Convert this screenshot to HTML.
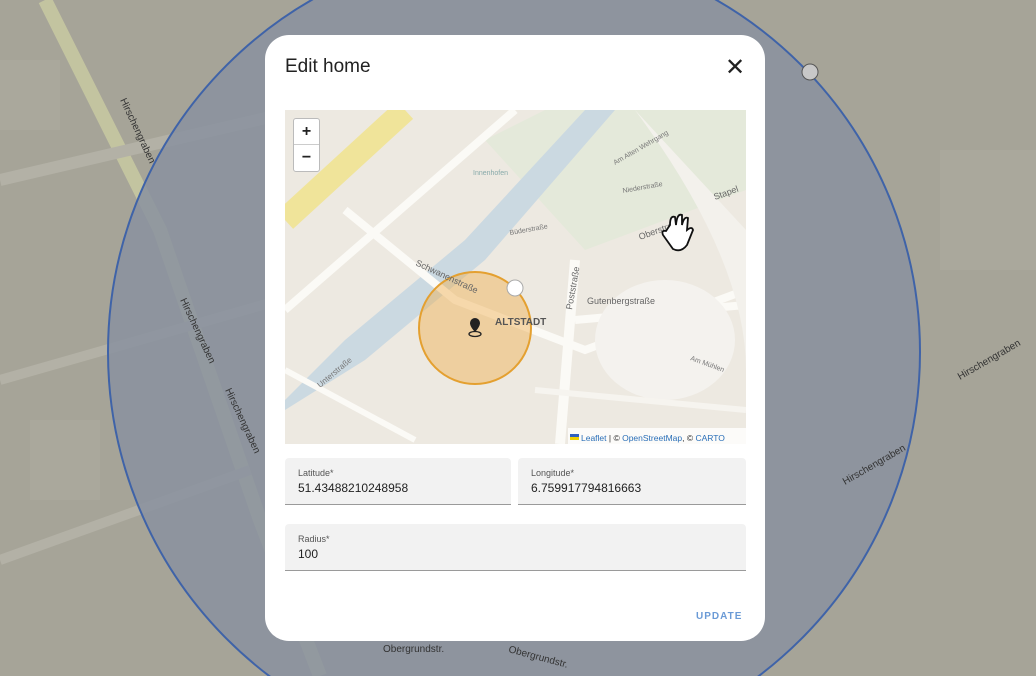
<!DOCTYPE html>
<html style="overflow:hidden;width:1036px;height:676px"><head><meta charset="utf-8"><style>
*{margin:0;padding:0;box-sizing:border-box}
body{width:1036px;height:676px;overflow:hidden;position:relative;background:#a6a498;font-family:"Liberation Sans",Arial,sans-serif}
.abs{position:absolute}
.dlg{left:265px;top:35px;width:500px;height:606px;background:#fff;border-radius:24px;overflow:hidden}
.title{left:20px;top:21px;font-size:19px;color:#222}
.close{left:460px;top:18px;font-size:24px;color:#222}
.map{left:20px;top:75px;width:461px;height:334px;background:#ece8df;overflow:hidden}
.field{background:#f2f2f2;border-bottom:1px solid #9a9a9a;border-radius:4px 4px 0 0}
.lbl{position:absolute;left:13px;top:10px;font-size:9px;color:#555}
.val{position:absolute;left:13px;top:23px;font-size:12px;color:#222}
.zoom{left:8px;top:8px;width:27px;height:54px;background:#fff;border:1px solid #bbb;border-radius:3px;font-size:16px;text-align:center;line-height:25px;color:#222;font-weight:bold}
</style></head><body>
<svg class="abs" style="left:0;top:0;display:block" width="1036" height="676" viewBox="0 0 1036 676">
<g fill="#aaa89c">
<rect x="0" y="60" width="60" height="70"/>
<rect x="30" y="420" width="70" height="80"/><rect x="940" y="150" width="96" height="120"/>
</g>
<path d="M45 0 L160 230 L260 520 L320 676" stroke="#c3c4a0" stroke-width="14" fill="none"/>
<path d="M0 180 L300 110" stroke="#b3b1a6" stroke-width="12" fill="none"/>
<path d="M0 380 L280 300" stroke="#b3b1a6" stroke-width="10" fill="none"/>
<path d="M0 560 L250 470" stroke="#b3b1a6" stroke-width="10" fill="none"/>
<circle cx="514" cy="352" r="406" fill="#8a929f" fill-opacity="0.85" stroke="#3f63a8" stroke-width="2"/>
<circle cx="810" cy="72" r="8" fill="#c8c8c8" stroke="#555"/>
<text x="120" y="100" font-size="10" fill="#333" transform="rotate(65 120 100)">Hirschengraben</text>
<text x="180" y="300" font-size="10" fill="#333" transform="rotate(65 180 300)">Hirschengraben</text>
<text x="225" y="390" font-size="10" fill="#333" transform="rotate(65 225 390)">Hirschengraben</text>
<text x="960" y="380" font-size="10" fill="#333" transform="rotate(-30 960 380)">Hirschengraben</text>
<text x="845" y="485" font-size="10" fill="#333" transform="rotate(-30 845 485)">Hirschengraben</text>
<text x="383" y="652" font-size="10" fill="#333">Obergrundstr.</text>
<text x="508" y="652" font-size="10" fill="#333" transform="rotate(15 508 652)">Obergrundstr.</text>
</svg>
<div class="abs dlg">
<div class="abs title">Edit home</div>
<div class="abs close">✕</div>
<div class="abs map">
<svg width="461" height="334" style="position:absolute;left:0;top:0;display:block">
<rect x="0" y="0" width="461" height="334" fill="#ede9e1"/>
<path d="M200 30 L260 0 L461 0 L461 80 L300 140 Z" fill="#e4e9da"/>
<path d="M0 110 L120 0" stroke="#f0e49a" stroke-width="24" fill="none"/>
<path d="M0 290 L60 230 L180 130 L300 0 L330 0 L200 150 L80 250 L0 300 Z" fill="#cbd9e1"/>
<path d="M0 200 L230 0" stroke="#fbfaf6" stroke-width="8" fill="none"/>
<path d="M60 100 L170 190 L300 240 L461 180" stroke="#fbfaf6" stroke-width="8" fill="none"/>
<path d="M290 150 L275 334" stroke="#fbfaf6" stroke-width="10" fill="none"/>
<path d="M290 210 L461 195" stroke="#fbfaf6" stroke-width="8" fill="none"/>
<path d="M350 0 Q461 150 461 260 L461 120 Z" fill="#f3f1ec"/>
<ellipse cx="380" cy="230" rx="70" ry="60" fill="#f4f2ee"/>
<path d="M0 260 L130 330" stroke="#fbfaf6" stroke-width="6" fill="none"/>
<path d="M250 280 L461 300" stroke="#f6f4ef" stroke-width="6" fill="none"/>
<circle cx="190" cy="218" r="56" fill="#f0b050" fill-opacity="0.45" stroke="#e4a030" stroke-width="2"/>
<circle cx="230" cy="178" r="8" fill="#fff" stroke="#aaa"/>
<path d="M190 208 a5 5 0 0 1 5 5 c0 4 -5 9 -5 9 c0 0 -5 -5 -5 -9 a5 5 0 0 1 5 -5z" fill="#222"/>
<ellipse cx="190" cy="224" rx="6" ry="2.5" fill="none" stroke="#222" stroke-width="1.3"/>
<text x="210" y="215" font-size="10" font-weight="bold" fill="#555">ALTSTADT</text>
<text x="130" y="155" font-size="9" fill="#666" transform="rotate(25 130 155)">Schwanenstraße</text>
<text x="302" y="194" font-size="9" fill="#666">Gutenbergstraße</text>
<text x="287" y="200" font-size="9" fill="#666" transform="rotate(-80 287 200)">Poststraße</text>
<text x="355" y="130" font-size="9" fill="#666" transform="rotate(-20 355 130)">Oberstraße</text>
<text x="430" y="90" font-size="9" fill="#666" transform="rotate(-20 430 90)">Stapel</text>
<text x="188" y="65" font-size="7" fill="#8aa">Innenhofen</text>
<text x="225" y="125" font-size="7" fill="#777" transform="rotate(-10 225 125)">Büderstraße</text>
<text x="338" y="83" font-size="7" fill="#777" transform="rotate(-10 338 83)">Niederstraße</text>
<text x="330" y="55" font-size="7" fill="#777" transform="rotate(-30 330 55)">Am Alten Wehrgang</text>
<text x="35" y="278" font-size="8" fill="#777" transform="rotate(-40 35 278)">Unterstraße</text>
<text x="405" y="250" font-size="7" fill="#777" transform="rotate(20 405 250)">Am Mühlen</text>
<path d="M385 115 q0-10 5-8 l1 8 q1-12 6-10 l0 10 q2-9 6-7 l-1 12 q5-4 6 0 l-6 15 q-6 8-14 4 l-10-14 q-2-5 3-4 z" fill="#fff" stroke="#111" stroke-width="1.8"/>
<rect x="283" y="318" width="178" height="16" fill="#fff" fill-opacity="0.8"/>
<rect x="285" y="324" width="9" height="3" fill="#3060c0"/><rect x="285" y="327" width="9" height="3" fill="#f0d000"/>
<text x="296" y="331" font-size="8.5" fill="#333"><tspan fill="#2a6fb8">Leaflet</tspan> | © <tspan fill="#2a6fb8">OpenStreetMap</tspan>, © <tspan fill="#2a6fb8">CARTO</tspan></text>
</svg>
<div class="abs zoom">+<div style="border-top:1px solid #ccc">−</div></div>
</div>
<div class="abs field" style="left:20px;top:423px;width:226px;height:47px"><div class="lbl">Latitude*</div><div class="val">51.43488210248958</div></div>
<div class="abs field" style="left:253px;top:423px;width:228px;height:47px"><div class="lbl">Longitude*</div><div class="val">6.759917794816663</div></div>
<div class="abs field" style="left:20px;top:489px;width:461px;height:47px"><div class="lbl">Radius*</div><div class="val">100</div></div>
<div class="abs" style="left:431px;top:576px;font-size:10px;letter-spacing:1px;color:#6a9ad6;font-weight:bold">UPDATE</div>
</div>
</body></html>
